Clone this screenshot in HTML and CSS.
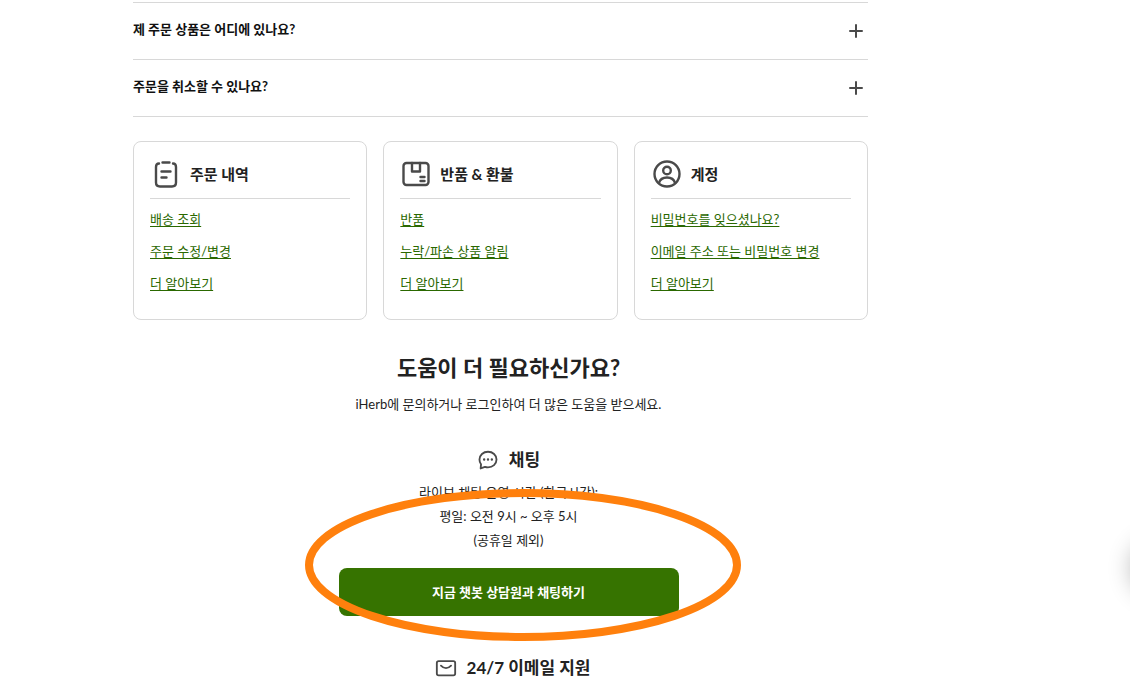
FILE: index.html
```
<!DOCTYPE html>
<html lang="ko">
<head>
  <meta charset="UTF-8">
  <meta name="viewport" content="width=device-width, initial-scale=1">
  <title>iHerb</title>
  <link rel="stylesheet" href="styles.css">
</head>
<body>
<main class="page">
  <div class="faq">
    <button class="faq-item" type="button">
      <span class="faq-question">제 주문 상품은 어디에 있나요?</span>
      <svg class="plus" viewBox="0 0 24 24"><path d="M12 6v12M6 12h12"/></svg>
    </button>
    <button class="faq-item" type="button">
      <span class="faq-question">주문을 취소할 수 있나요?</span>
      <svg class="plus" viewBox="0 0 24 24"><path d="M12 6v12M6 12h12"/></svg>
    </button>
  </div>

  <div class="cards">
    <section class="card">
      <h3 class="card-title">
        <svg class="card-icon" viewBox="0 0 32 32">
          <path d="M9 5.500C7 5.500 6 7 6 9v15.500c0 2.500 1.500 4 4 4h12c2.500 0 4-1.500 4-4V9c0-2-1-3.500-3-3.500M12.500 4.500h7M11.500 13.500h9M11.500 19.500h5"/>
        </svg>
        주문 내역
      </h3>
      <ul class="links">
        <li><a href="#">배송 조회</a></li>
        <li><a href="#">주문 수정/변경</a></li>
        <li><a href="#">더 알아보기</a></li>
      </ul>
    </section>
    <section class="card">
      <h3 class="card-title">
        <svg class="card-icon" viewBox="0 0 32 32">
          <rect x="3.500" y="5" width="25" height="22" rx="3"/>
          <path d="M12 5v8.500h8V5M20.500 19h4M20.500 23h4"/>
        </svg>
        반품 &amp; 환불
      </h3>
      <ul class="links">
        <li><a href="#">반품</a></li>
        <li><a href="#">누락/파손 상품 알림</a></li>
        <li><a href="#">더 알아보기</a></li>
      </ul>
    </section>
    <section class="card">
      <h3 class="card-title">
        <svg class="card-icon" viewBox="0 0 32 32">
          <circle cx="16" cy="16" r="12.500"/>
          <circle cx="16" cy="12.500" r="3.800"/>
          <path d="M8 25c1-3.600 4-5.500 8-5.500s7 1.900 8 5.500"/>
        </svg>
        계정
      </h3>
      <ul class="links">
        <li><a href="#">비밀번호를 잊으셨나요?</a></li>
        <li><a href="#">이메일 주소 또는 비밀번호 변경</a></li>
        <li><a href="#">더 알아보기</a></li>
      </ul>
    </section>
  </div>

  <section class="help">
    <h2 class="help-title">도움이 더 필요하신가요?</h2>
    <p class="help-text">iHerb에 문의하거나 로그인하여 더 많은 도움을 받으세요.</p>

    <div class="contact">
      <h3 class="contact-title">
        <svg class="contact-icon" viewBox="0 0 24 24">
          <path d="M4 21.200l.4-4.500A8.700 8.700 0 0 1 2.700 11.500C2.700 6.700 6.800 3 12 3s9.300 3.700 9.300 8.500S17.200 20 12 20c-1.200 0-2.300-.2-3.300-.5z"/>
          <path class="dots" d="M7.800 11.500h.01M12 11.500h.01M16.200 11.500h.01"/>
        </svg>
        채팅
      </h3>
      <p class="hours">라이브 채팅 운영 시간 (한국시간):<br>평일: 오전 9시 ~ 오후 5시<br>(공휴일 제외)</p>
      <button class="chat-button" type="button">지금 챗봇 상담원과 채팅하기</button>
      <svg class="marker" viewBox="0 0 438 154"><ellipse cx="219" cy="77" rx="214" ry="72"/></svg>
    </div>

    <h3 class="contact-title email">
      <svg class="contact-icon" viewBox="0 0 24 24">
        <rect x="2" y="4.500" width="20" height="15.500" rx="2"/>
        <path d="M6.500 9.500c3.500 3.600 7.500 3.600 11 0"/>
      </svg>
      24/7 이메일 지원
    </h3>
  </section>
</main>
<div class="float-shadow"></div>
</body>
</html>
```
FILE: styles.css
```
body {
  margin: 0;
  overflow: hidden;
  background-color: #fff;
  color: #222;
  font-family: Lato, "Noto Sans CJK KR", sans-serif;
  font-size: 13px;
  line-height: 24px;
}

h2, h3, p, ul {
  margin: 0;
  padding: 0;
}

svg {
  fill: none;
  stroke: #4a4a4a;
  stroke-width: 2;
  stroke-linecap: round;
  stroke-linejoin: round;
}

button {
  border: 0;
  font: inherit;
  cursor: pointer;
}

.page {
  margin: 0 262px 0 133px;
  padding-top: 2px;
}

.faq {
  border-top: 1px solid #d8d8d8;
}

.faq-item {
  display: flex;
  align-items: center;
  justify-content: space-between;
  width: 100%;
  height: 57px;
  padding: 0;
  border-bottom: 1px solid #d8d8d8;
  background: none;
  color: #111;
  text-align: left;
}

.faq-question {
  padding-bottom: 4px;
  font-weight: 700;
}

.plus {
  width: 24px;
  height: 24px;
}

.cards {
  display: grid;
  grid-template-columns: repeat(3, 1fr);
  gap: 16px;
  margin-top: 24px;
}

.card {
  padding: 16px 16px 20px;
  border: 1px solid #d8d8d8;
  border-radius: 8px;
}

.card-title {
  display: flex;
  align-items: center;
  gap: 8px;
  height: 32px;
  padding-bottom: 8px;
  border-bottom: 1px solid #d8d8d8;
  font-size: 15px;
}

.card-icon {
  width: 32px;
  height: 32px;
  stroke-width: 2.4;
}

.links {
  padding-top: 4px;
  list-style: none;
  line-height: 32px;
}

.links a {
  color: #2a6800;
  text-underline-offset: 2px;
}

.help {
  padding: 32px 0 0 16px;
  text-align: center;
}

.help-title {
  font-size: 22px;
  line-height: 32px;
}

.help-text {
  margin: 8px 0 28px;
}

.contact {
  position: relative;
  max-width: 340px;
  margin: 0 auto 36px;
}

.contact-title {
  display: flex;
  align-items: center;
  justify-content: center;
  gap: 10px;
  font-size: 17px;
  line-height: 32px;
}

.email {
  padding-left: 8px;
}

.contact-icon {
  width: 22px;
  height: 22px;
}

.contact-icon .dots {
  stroke-width: 2.6;
}

.hours {
  padding: 4px 0 16px;
}

.chat-button {
  display: block;
  width: 100%;
  height: 48px;
  border-radius: 8px;
  background-color: #367300;
  color: #fff;
  font-weight: 700;
}

/* ring over the chat block */
.marker {
  position: absolute;
  left: -35px;
  bottom: -26px;
  width: 438px;
  height: 154px;
  pointer-events: none;
}

.marker ellipse {
  stroke: #ff800d;
  stroke-width: 8;
}

.float-shadow {
  position: fixed;
  top: 540px;
  right: -58px;
  width: 56px;
  height: 56px;
  border-radius: 50%;
  box-shadow: 0 0 24px rgba(0, 0, 0, 0.3);
}
```
